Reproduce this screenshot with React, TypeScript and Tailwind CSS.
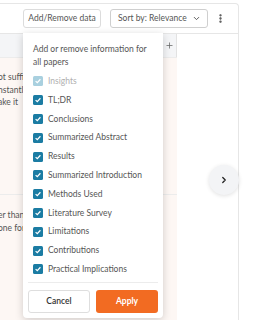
import { MoreVertical, ChevronDown, ChevronRight, Plus } from "lucide-react";

const FIELDS = [
  { label: "Insights", disabled: true },
  { label: "TL;DR" },
  { label: "Conclusions" },
  { label: "Summarized Abstract" },
  { label: "Results" },
  { label: "Summarized Introduction" },
  { label: "Methods Used" },
  { label: "Literature Survey" },
  { label: "Limitations" },
  { label: "Contributions" },
  { label: "Practical Implications" },
];

function Check({ disabled }: { disabled?: boolean }) {
  return (
    <span
      className={`grid h-[10px] w-[10px] shrink-0 place-items-center rounded-[1.5px] ${
        disabled ? "bg-[#a9d0df]" : "bg-[#1b7ca3]"
      }`}
    >
      <svg viewBox="0 0 10 10" className="h-[8px] w-[8px]">
        <path d="M2 5.2 L4.1 7.2 L8 2.8" fill="none" stroke="white" strokeWidth="1.5" />
      </svg>
    </span>
  );
}

export default function App() {
  return (
    <div className="relative h-[320px] w-[258px] overflow-hidden bg-white font-['Lato',sans-serif] text-[#4a4a4a]">
      <div className="mt-[3px] h-[317px] w-[239px] rounded-tr-[4px] border-r border-t border-[#e6e6e6]">
        <div className="flex h-[30px] items-center gap-[9px] border-b border-[#e6e6e6] pl-[23px]">
          <button className="h-[19px] w-[78px] rounded-[3px] border border-[#dcdcdc] text-[8.5px] text-[#555]">
            Add/Remove data
          </button>
          <button className="flex h-[19px] w-[98px] items-center justify-between rounded-[3px] border border-[#cfcfcf] pl-[7px] pr-[6px] text-[8.5px] text-[#555]">
            Sort by: Relevance
            <ChevronDown className="h-[9px] w-[9px]" strokeWidth={2.5} />
          </button>
          <MoreVertical className="-ml-[2px] h-[11px] w-[11px] text-[#444]" strokeWidth={3} />
        </div>
        <div className="w-[177px]">
          <div className="flex h-[24px] border-b border-[#ececec] bg-[#f4f5f7]">
            <div className="flex-1" />
            <div className="grid w-[16px] place-items-center border-l border-r border-[#e2e2e2]">
              <Plus className="h-[9px] w-[9px] text-[#666]" />
            </div>
          </div>
          <div className="h-[137px] overflow-hidden border-b border-[#ececec] bg-[#fdf7f4] pt-[13px] text-[8.5px] leading-[12.5px] text-[#555]">
            <p className="-ml-[2px] whitespace-nowrap">ot sufficient to</p>
            <p className="-ml-[2px] whitespace-nowrap">nstantly to</p>
            <p className="-ml-[2px] whitespace-nowrap">ake it</p>
          </div>
          <div className="h-[130px] overflow-hidden bg-[#fdf7f4] pt-[14px] text-[8.5px] leading-[12.5px] text-[#555]">
            <p className="-ml-[2px] whitespace-nowrap">er than</p>
            <p className="-ml-[2px] whitespace-nowrap">one for</p>
          </div>
        </div>
      </div>

      <div className="absolute left-[23px] top-[33px] flex h-[285px] w-[140px] flex-col rounded-b-[4px] bg-white px-[5px] pt-[10px] shadow-[0_2px_8px_rgba(0,0,0,0.18)]">
        <p className="px-[5px] text-[8.5px] leading-[12.5px] text-[#555]">
          Add or remove information for all papers
        </p>
        <div className="mt-[4px] flex flex-col px-[5px]">
          {FIELDS.map((f) => (
            <div key={f.label} className="flex h-[18.8px] items-center gap-[5px]">
              <Check disabled={f.disabled} />
              <span
                className={`whitespace-nowrap text-[8.5px] ${
                  f.disabled ? "text-[#b0b0b0]" : "text-[#555]"
                }`}
              >
                {f.label}
              </span>
            </div>
          ))}
        </div>
        <div className="mt-[3px] border-t border-[#ececec]" />
        <div className="mt-[7px] flex gap-[6px]">
          <button className="h-[23px] w-[62px] rounded-[3px] border border-[#dedede] text-[8.5px] font-semibold text-[#333]">
            Cancel
          </button>
          <button className="h-[23px] w-[62px] rounded-[3px] bg-[#f26b22] text-[8.5px] font-bold text-white">
            Apply
          </button>
        </div>
      </div>

      <button className="absolute left-[209px] top-[165px] grid h-[30px] w-[30px] place-items-center rounded-full bg-[#f3f4f6] shadow-[0_1px_4px_rgba(0,0,0,0.12)]">
        <ChevronRight className="h-[10px] w-[10px] text-[#222]" strokeWidth={3} />
      </button>
    </div>
  );
}
